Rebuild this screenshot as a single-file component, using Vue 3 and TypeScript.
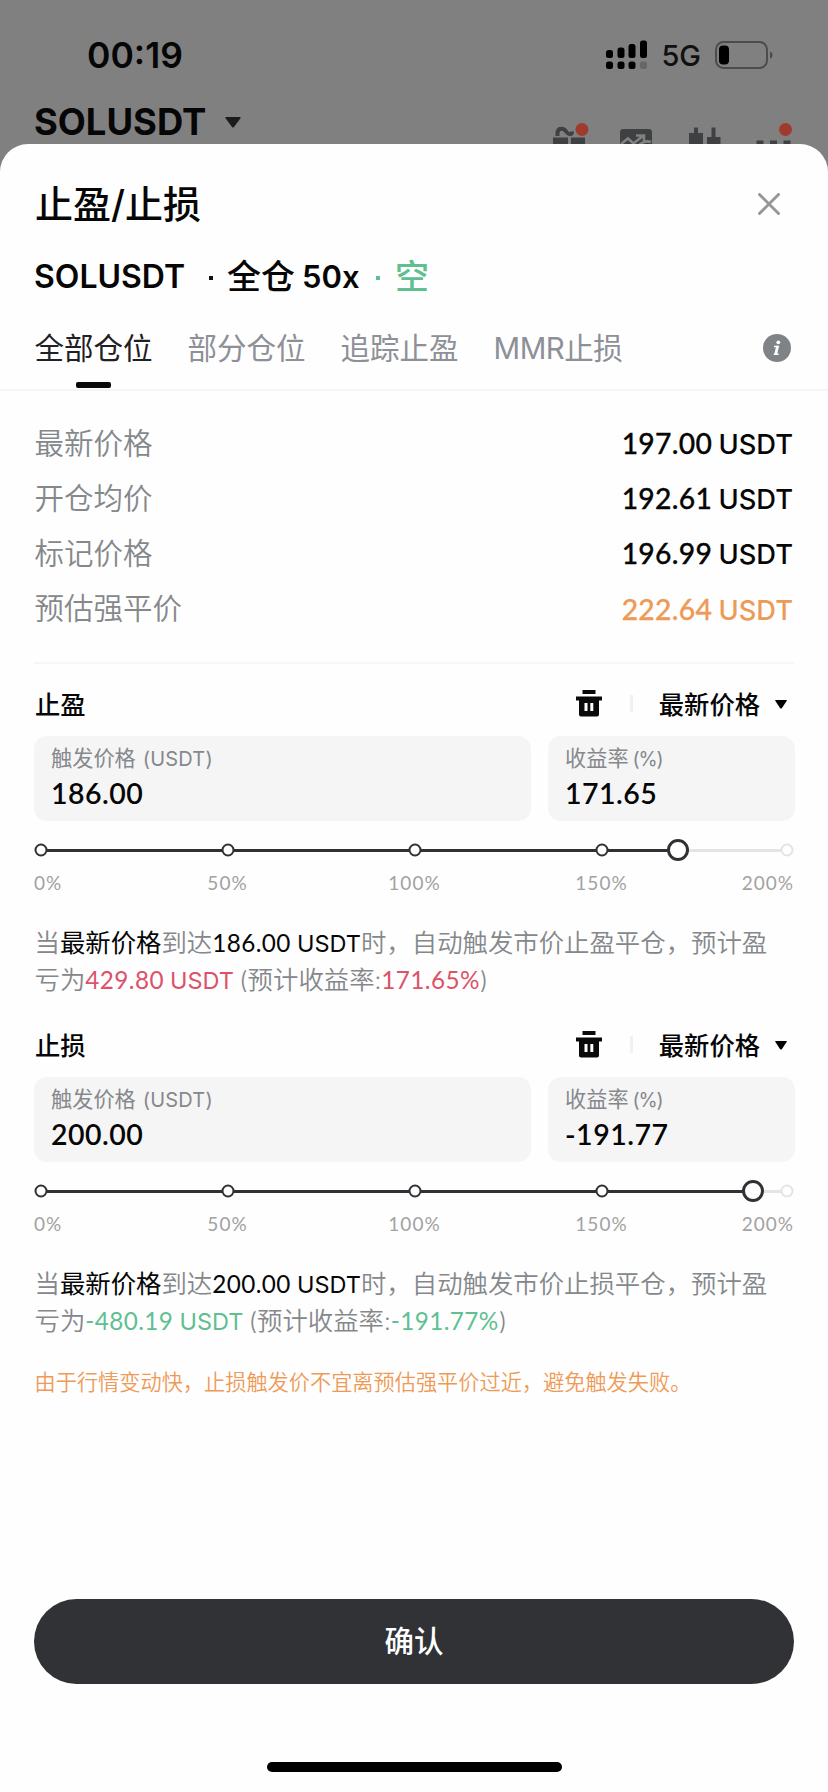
<script setup lang="ts">
interface PriceRow {
  label: string
  value: string
  warn?: boolean
}

interface OrderSection {
  title: string
  trigger: string
  rate: string
  thumb: number
  action: string
  pnl: string
  tone: 'loss' | 'gain'
}

const tabs: string[] = ['全部仓位', '部分仓位', '追踪止盈', 'MMR止损']

const prices: PriceRow[] = [
  { label: '最新价格', value: '197.00' },
  { label: '开仓均价', value: '192.61' },
  { label: '标记价格', value: '196.99' },
  { label: '预估强平价', value: '222.64', warn: true },
]

const sections: OrderSection[] = [
  { title: '止盈', trigger: '186.00', rate: '171.65', thumb: 85.45, action: '自动触发市价止盈平仓，预计盈', pnl: '429.80', tone: 'loss' },
  { title: '止损', trigger: '200.00', rate: '-191.77', thumb: 95.4, action: '自动触发市价止损平仓，预计盈', pnl: '-480.19', tone: 'gain' },
]

const stops: number[] = [0, 25.07, 50.13, 75.2, 100]
const marks: string[] = ['0%', '50%', '100%', '150%', '200%']
</script>

<template>
  <div class="screen">
    <div class="status">
      <span class="clock">00:19</span>
      <div class="status-right">
        <svg class="signal" width="42" height="30" viewBox="0 0 42 30">
          <rect x="0" y="10" width="7" height="8" rx="2.5" />
          <rect x="11.5" y="7.5" width="7" height="10.5" rx="2.5" />
          <rect x="22.5" y="4" width="7" height="14" rx="2.5" />
          <rect x="34" y="0.5" width="7" height="17.5" rx="2.5" />
          <rect x="0" y="21.5" width="7" height="7.5" rx="2.5" />
          <rect x="11.5" y="21.5" width="7" height="7.5" rx="2.5" />
          <rect x="22.5" y="21.5" width="7" height="7.5" rx="2.5" />
          <rect x="34" y="21.5" width="7" height="7.5" rx="2.5" fill="#666" />
        </svg>
        <span class="net">5G</span>
        <svg class="battery" width="58" height="28" viewBox="0 0 58 28">
          <rect x="1" y="1" width="51" height="26" rx="7.5" fill="none" stroke="#4c4c4c" stroke-width="2" />
          <rect x="4" y="4.5" width="10" height="19" rx="4" />
          <path d="M55 10.500c3.500 1 3.500 6 0 7z" fill="#4c4c4c" />
        </svg>
      </div>
    </div>

    <div class="topbar">
      <span class="pair">SOLUSDT</span>
      <svg class="pair-arrow" width="16" height="11" viewBox="0 0 16 11"><path d="M1.500 0h13q2 0 .8 1.500L9 10q-1 1.200-2 0L.7 1.500Q-.5 0 1.500 0z" fill="#1c1c1f" /></svg>
      <svg class="tools" width="241" height="24" viewBox="0 0 241 24">
        <g fill="#3e4042">
          <path d="M0 16.500h15V24H0zM18 16.500h14V24H18z" />
          <path d="M4.500 15v-2.500c0-6 6-6 9-1.500 2 3 5.500 3 5.500-.5" fill="none" stroke="#3e4042" stroke-width="4" />
          <path d="M67 11q0-3 3-3h26q3 0 3 3v13H67z" />
          <path d="M68 23l7-5.500 5.500 5L91 14M83 14.500h8v6M86 24q6-5 12-3" fill="none" stroke="#808080" stroke-width="2.600" />
          <path d="M136 12h5V6.500h4V12h5v12h-14zM154 16h4.500V6.500h4V16h5v8H154z" />
          <path d="M203.500 19.500h7V24h-7zM217 19.500h7V24h-7zM230.500 19.500h7V24h-7z" />
        </g>
        <circle cx="29" cy="8.500" r="6.500" fill="#a03a2e" />
        <circle cx="232.500" cy="8.500" r="6.500" fill="#a03a2e" />
      </svg>
    </div>

    <main class="sheet">
      <header class="head">
        <h1>止盈/止损</h1>
        <svg width="22" height="22" viewBox="0 0 22 22"><path d="M1.500 1.500l19 19M20.500 1.500l-19 19" stroke="#979797" stroke-width="3" stroke-linecap="round" /></svg>
      </header>

      <div class="position">
        <span class="sym">SOLUSDT</span>
        <i class="dot"></i>
        <span class="mode">全仓</span>
        <span class="lev">50x</span>
        <i class="dot green"></i>
        <span class="side">空</span>
      </div>

      <nav class="tabs">
        <span v-for="(t, i) in tabs" :key="t" class="tab" :class="{ active: i === 0 }">{{ t }}</span>
        <svg class="info" width="28" height="28" viewBox="0 0 28 28">
          <circle cx="14" cy="14" r="14" fill="#808386" />
          <circle cx="15.300" cy="8.300" r="1.900" fill="#fff" />
          <path d="M11 12.400h4M10.800 20.300h4.800" fill="none" stroke="#fff" stroke-width="1.500" />
          <path d="M13.300 11.700l-2.200 9.300h2.800l2.300-9.300z" fill="#fff" />
        </svg>
      </nav>

      <dl class="prices">
        <div v-for="p in prices" :key="p.label" class="price">
          <dt>{{ p.label }}</dt>
          <dd :class="{ warn: p.warn }"><span class="num">{{ p.value }}</span> USDT</dd>
        </div>
      </dl>

      <section v-for="s in sections" :key="s.title" class="order">
        <div class="order-head">
          <h2>{{ s.title }}</h2>
          <svg class="trash" width="26" height="27" viewBox="0 0 26 27">
            <path d="M6.500 0h13v4h-13zM0 6.500h26v4H0zM3 10h20v14.500q0 2-2 2H5q-2 0-2-2z" fill="#0a0a0a" />
            <path d="M8.500 13h3v8h-3zM14.300 13h3v8h-3z" fill="#fff" />
          </svg>
          <i class="bar"></i>
          <span class="source">最新价格</span>
          <svg class="caret" width="12" height="9" viewBox="0 0 12 9"><path d="M.8 0h10.400q1.200 0 .4 1L7 8q-1 1.200-2 0L.4 1Q-.4 0 .8 0z" /></svg>
        </div>

        <div class="fields">
          <div class="field">
            <label>触发价格 <span class="usdt">(USDT)</span></label>
            <b class="num">{{ s.trigger }}</b>
          </div>
          <div class="field">
            <label>收益率 <span class="pct">(%)</span></label>
            <b class="num">{{ s.rate }}</b>
          </div>
        </div>

        <div class="slider">
          <div class="fill" :style="{ width: s.thumb + '%' }"></div>
          <i v-for="p in stops" :key="p" class="stop" :class="{ off: p > s.thumb }" :style="{ left: p + '%' }"></i>
          <i class="thumb" :style="{ left: s.thumb + '%' }"></i>
        </div>
        <div class="marks num">
          <span v-for="m in marks" :key="m">{{ m }}</span>
        </div>

        <p class="note">
          <span class="line">当<em>最新价格</em>到达<em class="amount"><span class="num">{{ s.trigger }}</span> USDT</em>时，{{ s.action }}</span>
          <span class="line">亏为<span class="amount" :class="s.tone"><span class="num">{{ s.pnl }}</span> USDT</span><span class="paren"> (</span>预计收益率<span class="paren">:</span><span class="amount" :class="s.tone"><span class="num">{{ s.rate }}%</span></span><span class="paren">)</span></span>
        </p>
      </section>

      <p class="caution">由于行情变动快，止损触发价不宜离预估强平价过近，避免触发失败。</p>

      <button class="confirm" type="button">确认</button>
      <div class="home"></div>
    </main>
  </div>
</template>

<style>
body {
  margin: 0;
  background: #808080;
}
</style>

<style scoped>
.screen {
  width: 828px;
  height: 1792px;
  overflow: hidden;
  background: #808080;
  color: #060606;
  font-family: Inter, "Noto Sans CJK SC", sans-serif;
  display: flex;
  flex-direction: column;
}
i, em { font-style: normal; }
h1, h2, p, dl, dd { margin: 0; }
svg { display: block; flex: none; }
.num { font-family: Lato, "Noto Sans CJK SC", sans-serif; letter-spacing: 0.5px; }

.status {
  height: 56px;
  padding: 27px 55px 0 87px;
  display: flex;
  align-items: center;
  justify-content: space-between;
  flex: none;
}
.clock { font-size: 35.5px; font-weight: 600; line-height: 56px; margin-top: 2px; }
.status-right { display: flex; align-items: center; }
.net { font-size: 29px; font-weight: 500; margin: 0 14px 0 13px; color: #101010; }
.topbar {
  height: 61px;
  padding: 0 34px;
  display: flex;
  align-items: flex-start;
  flex: none;
}
.pair { font-size: 36.4px; font-weight: 700; line-height: 44px; margin-top: 17px; }
.pair-arrow { margin: 34px 0 0 19px; }
.tools { margin: 38px 0 0 auto; }

.sheet {
  flex: 1;
  min-height: 0;
  background: #fefefe;
  border-radius: 28px 28px 0 0;
  display: flex;
  flex-direction: column;
}
.head {
  height: 92px;
  padding: 27px 48px 0 35px;
  box-sizing: border-box;
  display: flex;
  align-items: center;
  justify-content: space-between;
}
h1 { font-size: 38px; font-weight: 500; line-height: 56px; }
.position {
  height: 80px;
  padding-left: 34px;
  display: flex;
  align-items: center;
  font-weight: 600;
}
.sym { font-size: 32px; width: 175px; }
.dot { width: 4px; height: 4px; background: #111; margin-top: 3px; }
.mode { font-size: 34px; font-weight: 500; margin: 0 0 4px 14px; width: 75px; }
.lev { font-size: 31px; width: 74px; }
.green { background: #5fbf91; }
.side { font-size: 34px; color: #5fbf91; font-weight: 500; margin: 0 0 4px 15px; }
.tabs {
  height: 73px;
  padding: 0 37px 0 34.5px;
  border-bottom: 2px solid #f4f4f5;
  display: flex;
  align-items: stretch;
  gap: 35px;
}
.tab {
  position: relative;
  font-size: 29.5px;
  line-height: 65px;
  color: #8d9096;
}
.tab:nth-child(4) { letter-spacing: -0.5px; }
.active { color: #1f2023; }
.active::after {
  content: "";
  position: absolute;
  left: 41.5px;
  bottom: 1px;
  width: 35px;
  height: 6px;
  border-radius: 2px;
  background: #080808;
}
.info { margin: 18px 0 0 auto; }

.prices {
  margin: 0 34px;
  padding: 25px 0 25px;
  border-bottom: 2px solid #f6f6f6;
}
.price {
  height: 55.2px;
  display: flex;
  align-items: center;
  justify-content: space-between;
}
dt { font-size: 29.5px; color: #85888b; font-weight: 350; margin: 0 0 6px 0.5px; }
dd { font-size: 27.3px; font-weight: 500; margin-right: 1px; word-spacing: -1px; }
dd .num { font-size: 28.3px; letter-spacing: 0.3px; -webkit-text-stroke: 0.3px currentColor; }
.warn { color: #ee9a57; }

.order { padding: 0 34px; height: 341px; flex: none; }
.order-head { height: 72px; display: flex; align-items: center; padding: 6px 7px 0 1px; box-sizing: border-box; }
h2 { font-size: 25.3px; font-weight: 500; flex: 1; }
.trash { margin-top: 1px; }
.bar { width: 3px; height: 17px; background: #f1f1f1; margin: 2px 26px 0 28px; }
.source { font-size: 25.3px; margin-right: 15px; font-weight: 500; }
.caret { margin-top: 3px; }
.fields { display: grid; grid-template-columns: 497px 247px; gap: 17px; width: 761px; }
.field {
  height: 85px;
  box-sizing: border-box;
  padding: 7px 17px 0;
  border-radius: 13px;
  background: #f5f5f5;
  display: flex;
  flex-direction: column;
}
label { font-size: 21.2px; line-height: 30px; color: #85888c; white-space: pre; }
.usdt { font-size: 20px; letter-spacing: 0.2px; margin-left: 1px; }
.pct { font-size: 19.5px; letter-spacing: -1.2px; margin-left: -2px; }
.field b { font-size: 28.5px; line-height: 38px; font-weight: 600; }
.slider {
  position: relative;
  height: 3px;
  margin: 28px 7px 0 7px;
  background: #e4e4e4;
}
.fill { height: 3px; background: #303134; }
.stop, .thumb {
  position: absolute;
  top: 50%;
  width: 13px;
  height: 13px;
  box-sizing: border-box;
  border: 2px solid #303134;
  border-radius: 50%;
  background: #fff;
  transform: translate(-50%, -50%);
}
.off { border-color: #e4e4e4; }
.thumb { width: 22px; height: 22px; border-width: 3px; }
.marks {
  display: grid;
  grid-template-columns: 100px 187px 187px 187px 1fr;
  margin-top: 18px;
  font-size: 19px;
  line-height: 26px;
  letter-spacing: 1px;
  color: #a2a2a2;
}
.marks span { text-align: center; }
.marks span:first-child { text-align: left; }
.marks span:last-child { text-align: right; }
.note { margin: 28px 0 0 0.5px; font-size: 25.4px; line-height: 37.4px; color: #85888b; font-weight: 350; }
.line { display: block; white-space: pre; height: 37.4px; }
.note em { color: #060606; font-weight: 400; }
.note .amount { font-size: 23.5px; font-weight: 400; word-spacing: -0.5px; }
.note .num { font-size: 24.3px; letter-spacing: 0.4px; }
.paren { font-size: 24px; word-spacing: -1.5px; }
.note .loss { color: #dc5269; }
.note .gain { color: #5fbf91; }
.caution { margin: 20px 34.5px 0; font-size: 21.2px; line-height: 32px; color: #ee9a57; font-weight: 350; white-space: nowrap; }
.confirm {
  margin: 201px 34px 0;
  padding: 0 0 4px;
  height: 85px;
  flex: none;
  border: 0;
  border-radius: 43px;
  background: #303236;
  color: #fff;
  font-family: inherit;
  font-size: 29.5px;
  font-weight: 500;
}
.home { width: 295px; height: 10px; border-radius: 5px; background: #000; margin: 78px auto 0; flex: none; }
</style>
